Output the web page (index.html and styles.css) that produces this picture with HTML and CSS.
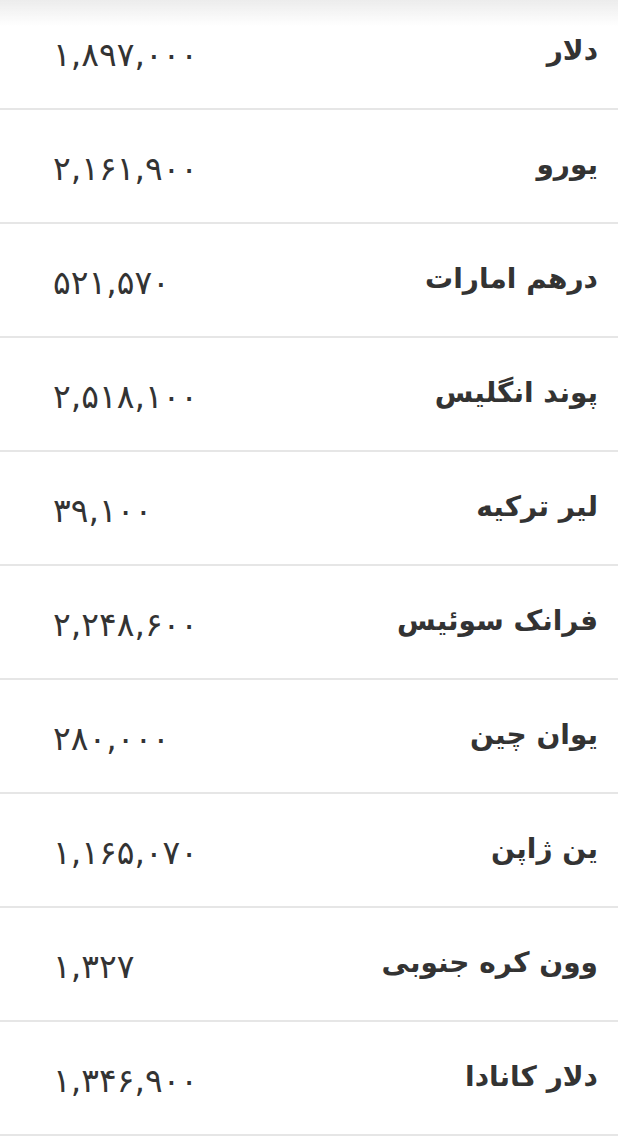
FILE: index.html
```html
<!DOCTYPE html>
<html lang="fa" dir="rtl">
<head>
<meta charset="utf-8">
<link rel="stylesheet" href="styles.css">
</head>
<body>
<div class="top-shadow"></div>
<ul class="rates">
  <li class="row"><span class="name">دلار</span><span class="price">۱,۸۹۷,۰۰۰</span></li>
  <li class="row"><span class="name">یورو</span><span class="price">۲,۱۶۱,۹۰۰</span></li>
  <li class="row"><span class="name">درهم امارات</span><span class="price">۵۲۱,۵۷۰</span></li>
  <li class="row"><span class="name">پوند انگلیس</span><span class="price">۲,۵۱۸,۱۰۰</span></li>
  <li class="row"><span class="name">لیر ترکیه</span><span class="price">۳۹,۱۰۰</span></li>
  <li class="row"><span class="name">فرانک سوئیس</span><span class="price">۲,۲۴۸,۶۰۰</span></li>
  <li class="row"><span class="name">یوان چین</span><span class="price">۲۸۰,۰۰۰</span></li>
  <li class="row"><span class="name">ین ژاپن</span><span class="price">۱,۱۶۵,۰۷۰</span></li>
  <li class="row"><span class="name">وون کره جنوبی</span><span class="price">۱,۳۲۷</span></li>
  <li class="row"><span class="name">دلار کانادا</span><span class="price">۱,۳۴۶,۹۰۰</span></li>
</ul>
</body>
</html>
```
FILE: styles.css
```css
html, body {
  margin: 0;
  padding: 0;
  background: #ffffff;
}
body {
  font-family: "DejaVu Sans", sans-serif;
  color: #333333;
  overflow: hidden;
}
.top-shadow {
  position: fixed;
  top: 0;
  left: 0;
  right: 0;
  height: 26px;
  background: linear-gradient(to bottom, #ececec, rgba(255, 255, 255, 0));
  z-index: 2;
}
.rates {
  list-style: none;
  margin: -4px 0 0 0;
  padding: 0;
}
.row {
  display: flex;
  justify-content: space-between;
  align-items: center;
  height: 112px;
  border-bottom: 2px solid #e6e6e6;
  padding: 0 20px 0 53px;
}
.name {
  font-size: 28px;
  font-weight: bold;
  color: #333333;
  padding-bottom: 4px;
}
.price {
  font-size: 33px;
  color: #333333;
  direction: ltr;
  text-align: left;
  padding-top: 4px;
}
```
